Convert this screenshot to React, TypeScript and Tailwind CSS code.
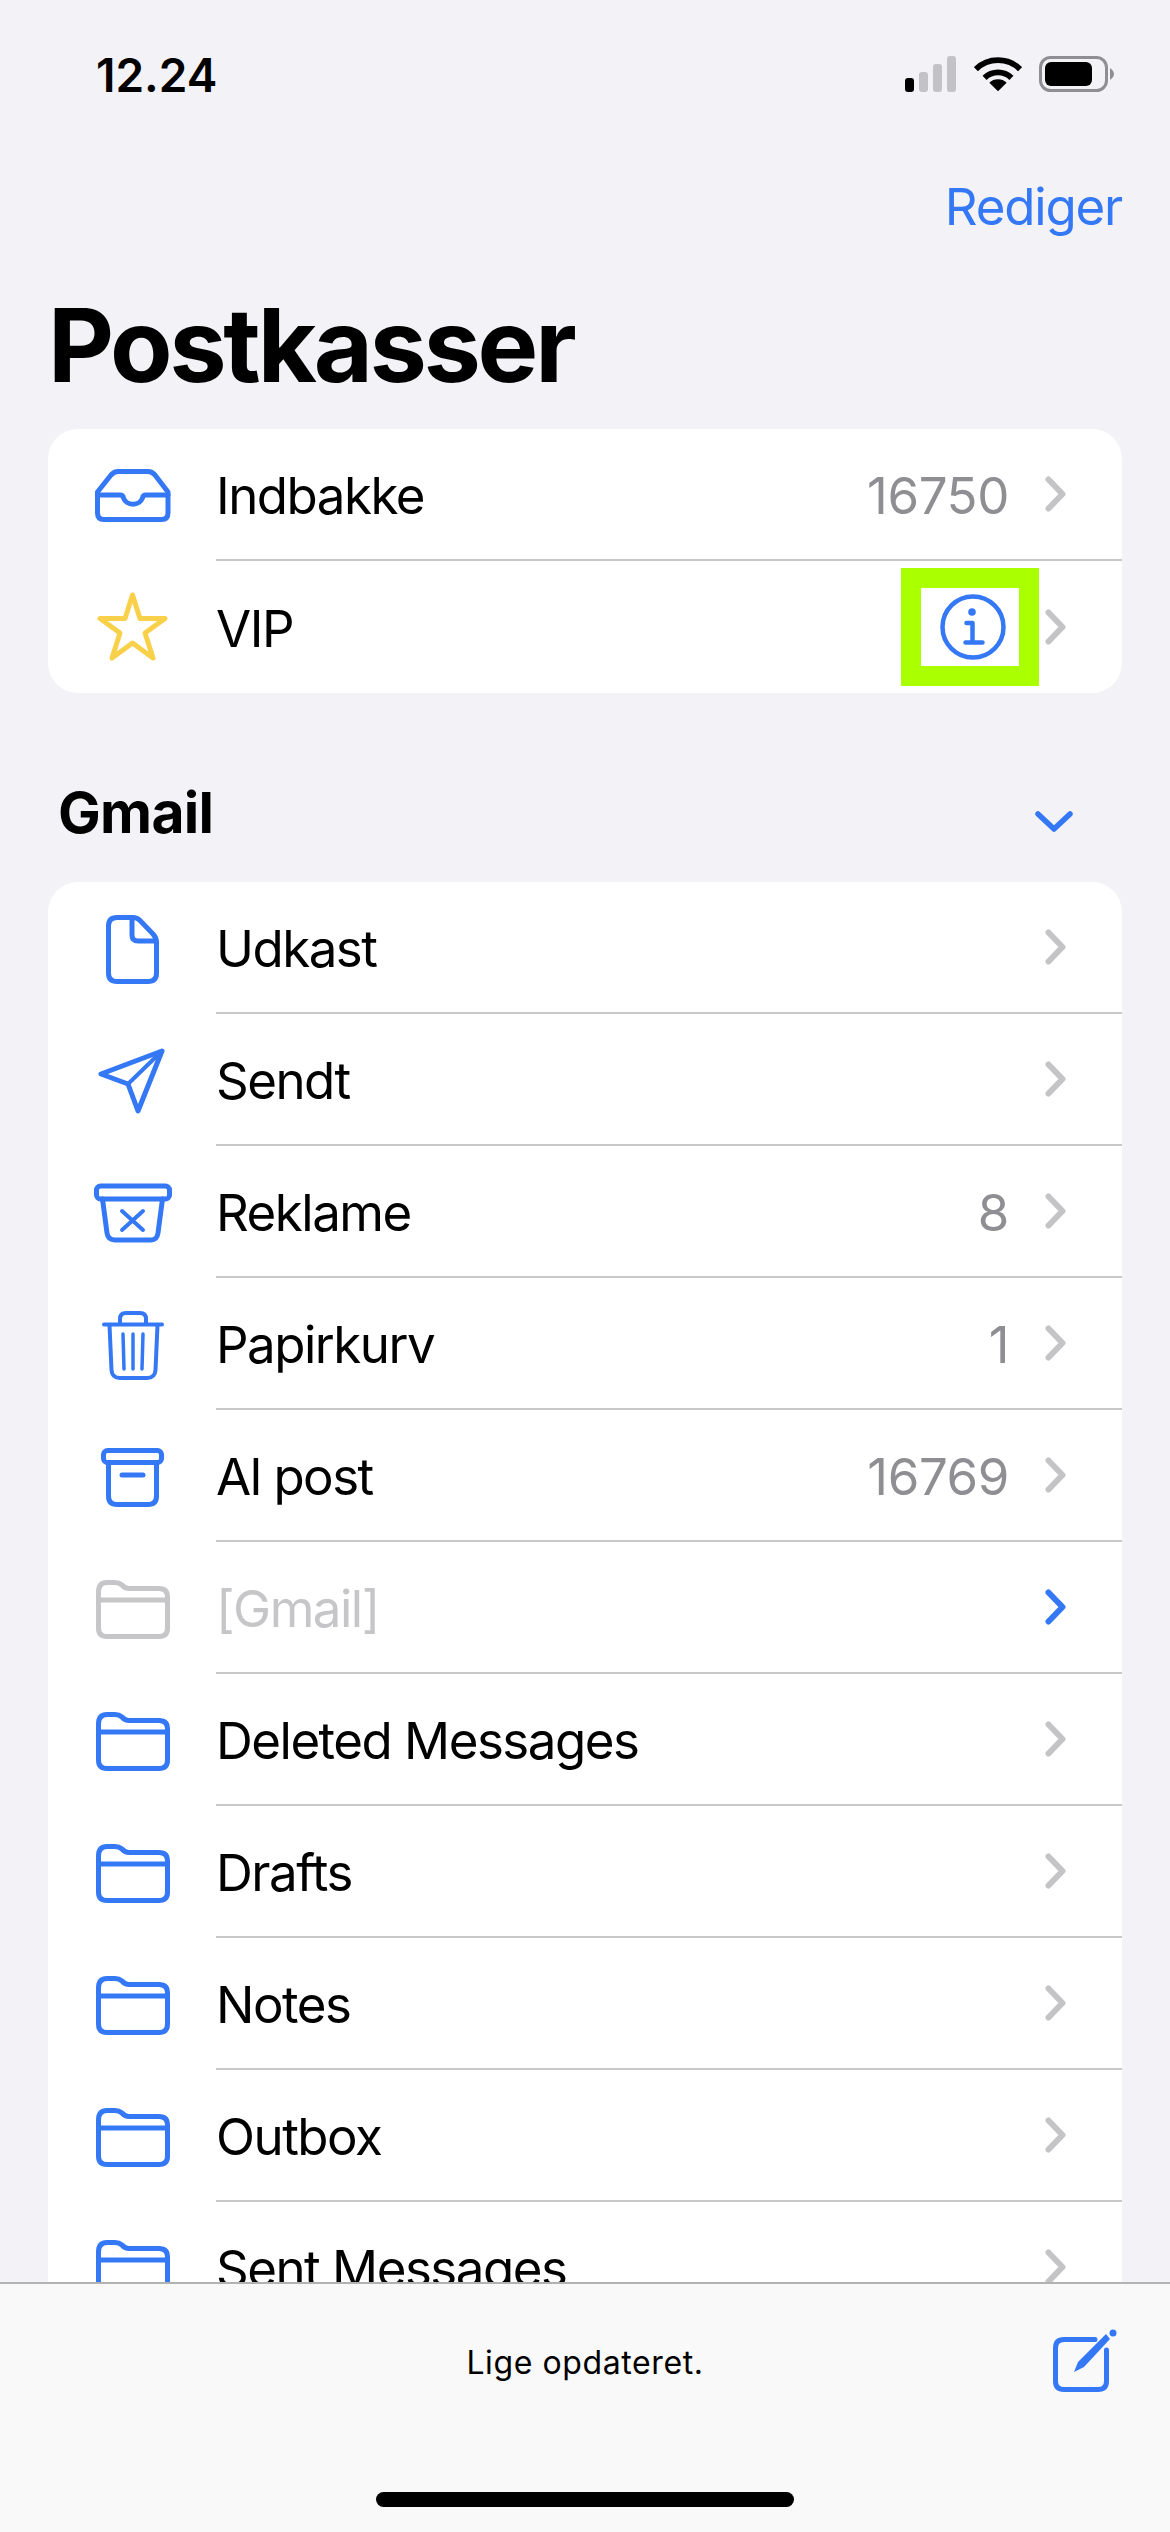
import type { ReactNode } from 'react';

const BLUE = '#3478f6';

const Ico = ({ children, color = BLUE, sw = 5 }: { children: ReactNode; color?: string; sw?: number }) => (
  <svg
    viewBox="0 0 84 84"
    className="w-[84px] h-[84px] shrink-0"
    fill="none"
    stroke={color}
    strokeWidth={sw}
    strokeLinecap="round"
    strokeLinejoin="round"
  >
    {children}
  </svg>
);

const InboxIcon = () => (
  <Ico>
    <path d="M7.5 39 L21 22 Q24 18.5 28 18.5 H58 Q62 18.5 65 22 L78 39 V60 Q78 66.5 71.5 66.5 H14 Q7.5 66.5 7.5 60 Z" />
    <path d="M7.5 42 H30 Q33 42 33.5 45 A 10 9 0 0 0 52.5 45 Q53 42 56 42 H78" />
  </Ico>
);

const StarIcon = () => (
  <Ico color="#f9d04a">
    <path d="M42.5 10 L50 33.5 H75 L55 48 L63 73 L42.5 58 L22 73 L30 48 L10 33.5 H35 Z" />
  </Ico>
);

const DocIcon = () => (
  <Ico>
    <path d="M18.5 20 Q18.5 11.5 27 11.5 H43 Q47 11.5 50 14.5 L63 28 Q66.5 32 66.5 36 V67 Q66.5 75.5 58 75.5 H27 Q18.5 75.5 18.5 67 Z" />
    <path d="M42 11.5 V29 Q42 35 48 35 H66" />
  </Ico>
);

const SendIcon = () => (
  <Ico>
    <path d="M72 13 L11 36 L38 46 L48 73 Z" />
    <path d="M72 13 L38 46" strokeWidth={4} />
  </Ico>
);

const JunkIcon = () => (
  <Ico>
    <rect x="6.5" y="16" width="73" height="13" rx="4" />
    <path d="M12.5 29 L17 63 Q18 70 25 70 H61 Q67 70 68 63 L72.5 29" />
    <path d="M32 41 L53 60 M53 41 L32 60" strokeWidth={4} />
  </Ico>
);

const TrashIcon = () => (
  <Ico>
    <path d="M14 22.5 H72" strokeWidth={4} />
    <path d="M30 22 V17 Q30 11 36 11 H50 Q56 11 56 17 V22" strokeWidth={4} />
    <path d="M19.5 23 L21.5 68 Q22 76 30 76 H57 Q65 76 65.5 68 L67.5 23" strokeWidth={4} />
    <path d="M33 32 L34 67 M43 32 V67 M53 32 L52 67" strokeWidth={3.5} />
  </Ico>
);

const ArchiveIcon = () => (
  <Ico>
    <rect x="13.5" y="16.5" width="58" height="12" rx="4" />
    <path d="M18.5 28.5 V62 Q18.5 70.5 27 70.5 H58 Q66.5 70.5 66.5 62 V28.5" />
    <path d="M32 41 H53" />
  </Ico>
);

const FolderIcon = ({ color = BLUE }: { color?: string }) => (
  <Ico color={color}>
    <path d="M8.5 26 Q8.5 16.5 17 16.5 H25 Q29 16.5 32 19 Q35 22.5 39 22.5 H69 Q77.5 22.5 77.5 31 V62 Q77.5 70.5 69 70.5 H17 Q8.5 70.5 8.5 62 Z" />
    <path d="M8.5 34 H77.5" />
  </Ico>
);

const Chevron = ({ color = '#c4c4c7' }: { color?: string }) => (
  <svg viewBox="0 0 21 36" className="w-[21px] h-[36px] shrink-0" fill="none" stroke={color} strokeWidth={6} strokeLinecap="round" strokeLinejoin="round">
    <path d="M3.5 3.5 L17.5 18 L3.5 32.5" />
  </svg>
);

const InfoBox = () => (
  <div className="w-[138px] h-[118px] border-[20px] border-[#aaff00] bg-white flex items-center justify-center pl-[5px] shrink-0 mr-[6px]">
    <svg viewBox="0 0 68 68" className="w-[68px] h-[68px]" fill="none" stroke={BLUE} strokeWidth={4.5} strokeLinecap="round" strokeLinejoin="round">
      <circle cx="34" cy="34" r="30.5" />
      <circle cx="33" cy="19" r="3.8" fill={BLUE} stroke="none" />
      <path d="M27.5 30 H33.5 V49.5 M26.5 49.5 H43.5" />
    </svg>
  </div>
);

interface RowProps {
  icon: ReactNode;
  label: string;
  count?: string;
  muted?: boolean;
  last?: boolean;
  right?: ReactNode;
  chevron?: string;
}

const Row = ({ icon, label, count, muted, last, right, chevron }: RowProps) => (
  <div className="flex h-[132px] items-stretch">
    <div className="w-[168px] shrink-0 flex items-center justify-center">{icon}</div>
    <div className={`flex-1 flex items-center pr-[56px] ${last ? '' : 'border-b-2 border-[#c8c8cb]'}`}>
      <span className={`flex-1 pt-[4px] text-[51px] tracking-[-1.5px] ${muted ? 'text-[#c6c6c8]' : 'text-black'}`}>{label}</span>
      {count && <span className="pt-[4px] text-[51px] tracking-[-0.4px] text-[#8e8e93] mr-[36px]">{count}</span>}
      {right}
      <Chevron color={chevron} />
    </div>
  </div>
);

const StatusBar = () => (
  <div className="h-[150px] shrink-0 flex items-start justify-between pl-[96px] pr-[55px] pt-[50px]">
    <span className="text-[46px] leading-[50px] font-semibold text-black">12.24</span>
    <div className="flex items-center gap-[17px] pt-[6px]">
      <svg viewBox="0 0 52 36" className="w-[52px] h-[36px]" fill="#c2c2c7">
        <rect x="0" y="22" width="9" height="14" rx="3" fill="#000" />
        <rect x="14" y="16" width="9" height="20" rx="3" />
        <rect x="28" y="8" width="9" height="28" rx="3" />
        <rect x="42" y="0" width="9" height="36" rx="3" />
      </svg>
      <svg viewBox="0 0 50 36" className="w-[48px] h-[36px]" fill="none" stroke="#000" strokeWidth={6}>
        <path d="M2 13 A 33 33 0 0 1 48 13" />
        <path d="M11 22 A 20 20 0 0 1 39 22" />
        <path d="M25 36 L16 27 A 13 13 0 0 1 34 27 Z" fill="#000" stroke="none" />
      </svg>
      <svg viewBox="0 0 76 36" className="w-[76px] h-[36px]">
        <rect x="1.5" y="1.5" width="66" height="33" rx="10" fill="none" stroke="#8e8e93" strokeWidth={3} />
        <rect x="6" y="6" width="47" height="24" rx="6" fill="#000" />
        <path d="M71 12 Q75 15 75 18 Q75 21 71 24 Z" fill="#8e8e93" />
      </svg>
    </div>
  </div>
);

const App = () => (
  <div className="w-[1170px] h-[2532px] overflow-hidden flex flex-col bg-[#f2f2f7] font-['Inter','Liberation_Sans',sans-serif]">
    <div className="flex-1 min-h-0 overflow-hidden">
      <StatusBar />
      <div className="mt-[27px] flex justify-end pr-[48px] h-[60px] items-center">
        <span className="text-[51px] tracking-[-1.2px] text-[#3478f6]">Rediger</span>
      </div>
      <h1 className="mt-[53px] pl-[48px] h-[110px] text-[102px] leading-[110px] font-bold tracking-[-3.2px] text-black">Postkasser</h1>
      <div className="mt-[29px] mx-[48px] bg-white rounded-[30px] overflow-hidden">
        <Row icon={<InboxIcon />} label="Indbakke" count="16750" />
        <Row icon={<StarIcon />} label="VIP" last right={<InfoBox />} />
      </div>
      <div className="mt-[92px] mb-[41px] pl-[58px] pr-[97px] flex items-center justify-between h-[56px]">
        <span className="text-[57px] font-bold tracking-[-0.7px] text-black">Gmail</span>
        <svg viewBox="0 0 38 24" className="mt-[18px] w-[38px] h-[24px]" fill="none" stroke={BLUE} strokeWidth={5.5} strokeLinecap="round" strokeLinejoin="round">
          <path d="M3 4 L19 19 L35 4" />
        </svg>
      </div>
      <div className="mx-[48px] bg-white rounded-t-[30px] overflow-hidden">
        <Row icon={<DocIcon />} label="Udkast" />
        <Row icon={<SendIcon />} label="Sendt" />
        <Row icon={<JunkIcon />} label="Reklame" count="8" />
        <Row icon={<TrashIcon />} label="Papirkurv" count="1" />
        <Row icon={<ArchiveIcon />} label="Al post" count="16769" />
        <Row icon={<FolderIcon color="#c6c6c8" />} label="[Gmail]" muted chevron={BLUE} />
        <Row icon={<FolderIcon />} label="Deleted Messages" />
        <Row icon={<FolderIcon />} label="Drafts" />
        <Row icon={<FolderIcon />} label="Notes" />
        <Row icon={<FolderIcon />} label="Outbox" />
        <Row icon={<FolderIcon />} label="Sent Messages" />
      </div>
    </div>
    <div className="h-[250px] shrink-0 bg-[#f9f9f9] border-t-2 border-[#b2b2b2] flex flex-col">
      <div className="h-[208px] relative flex justify-center pt-[57px]">
        <span className="text-[32px] leading-[44px] tracking-[0.6px] text-black">Lige opdateret.</span>
        <svg viewBox="0 0 68 68" className="absolute right-[52px] top-[44px] w-[68px] h-[68px]" fill="none" stroke={BLUE} strokeWidth={5} strokeLinecap="round" strokeLinejoin="round">
          <path d="M45 11.5 H14 Q5.5 11.5 5.5 20 V53 Q5.5 61.5 14 61.5 H48 Q56.5 61.5 56.5 53 V22" />
          <path d="M24 44 L28 34 L56 6 L60 11 L34 39 Z" fill={BLUE} stroke="none" />
          <circle cx="63" cy="5" r="3.5" fill={BLUE} stroke="none" />
        </svg>
      </div>
      <div className="flex justify-center">
        <div className="w-[418px] h-[15px] rounded-full bg-black" />
      </div>
    </div>
  </div>
);

export default App;
